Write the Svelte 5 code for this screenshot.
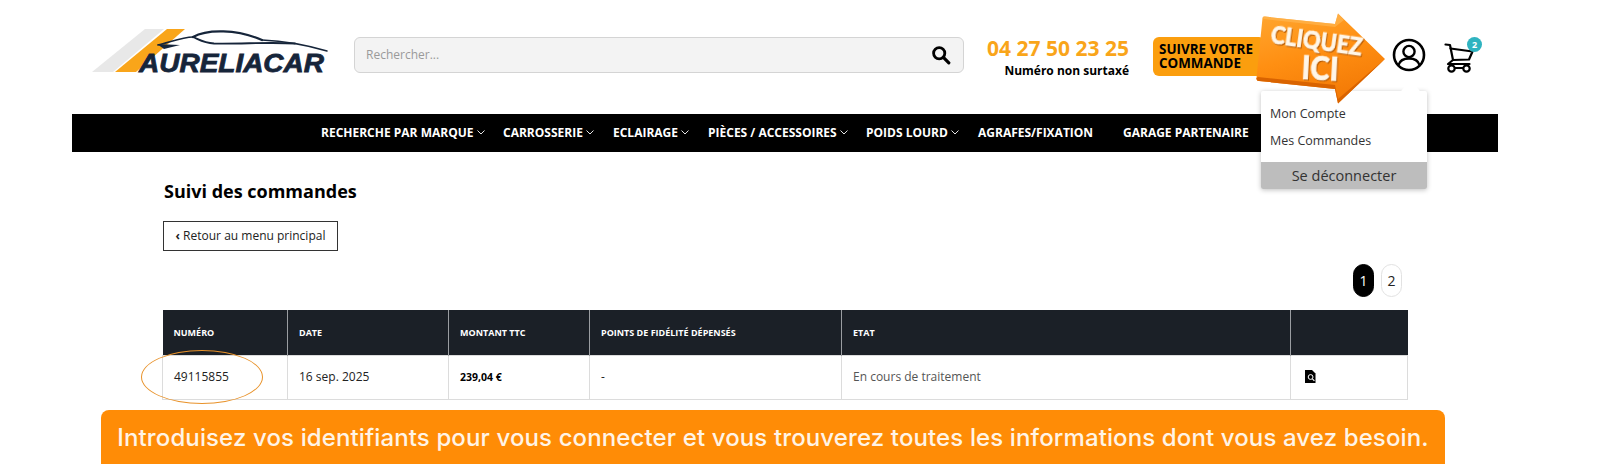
<script>
  const navItems = [
    { label: 'RECHERCHE PAR MARQUE', w: 182, chevron: true },
    { label: 'CARROSSERIE', w: 110, chevron: true },
    { label: 'ECLAIRAGE', w: 95, chevron: true },
    { label: 'PIÈCES / ACCESSOIRES', w: 158, chevron: true },
    { label: 'POIDS LOURD', w: 112, chevron: true },
    { label: 'AGRAFES/FIXATION', w: 145, chevron: false },
    { label: 'GARAGE PARTENAIRE', w: 130, chevron: false }
  ];
  const heads = ['Numéro', 'Date', 'Montant TTC', 'Points de fidélité dépensés', 'Etat', ''];
  const widths = [125, 161, 141, 252, 449, 117];
</script>

<div class="page">
  <header class="top">
    <div class="logo">
      <svg class="logo-art" width="245" height="50" viewBox="0 0 245 50">
        <polygon points="0,44 53,1 72,1 21,44" fill="#e8e8e8" />
        <polygon points="23,44 75,1 93,1 44,44" fill="#f9a51a" />
        <g fill="none" stroke="#16253a" stroke-linecap="round">
          <path d="M66 17 C 76 15 90 9 101 9" stroke-width="1.6" />
          <path d="M101 9 C 115 1 145 1 170 12" stroke-width="2.2" />
          <path d="M101 9 C 108 12 112 15 122 15.5 C 150 16 178 14 203 15.5" stroke-width="1.8" />
          <path d="M170 12 C 193 13 218 18 235 23" stroke-width="1.4" />
        </g>
        <path d="M65 16 L 88 17 L 72 21 Z" fill="#16253a" />
        <text class="logo-text" x="47" y="44" textLength="185" lengthAdjust="spacingAndGlyphs">AURELIACAR</text>
      </svg>
    </div>

    <div class="search">
      <span class="placeholder">Rechercher...</span>
      <svg width="20" height="20" viewBox="0 0 20 20"><circle cx="8.2" cy="8.2" r="5.6" fill="none" stroke="#000" stroke-width="2.8" /><line x1="12.4" y1="12.4" x2="17.8" y2="17.8" stroke="#000" stroke-width="3.2" stroke-linecap="round" /></svg>
    </div>

    <div class="phone">
      <div class="num">04 27 50 23 25</div>
      <div class="sub">Numéro non surtaxé</div>
    </div>

    <div class="track">SUIVRE VOTRE<br />COMMANDE</div>

    <svg class="user" width="34" height="34" viewBox="0 0 34 34">
      <circle cx="17" cy="17" r="15" fill="none" stroke="#000" stroke-width="2.6" />
      <circle cx="17" cy="13.5" r="5.6" fill="none" stroke="#000" stroke-width="2.4" />
      <path d="M6.5 27 C 8 22 12 20.5 17 20.5 C 22 20.5 26 22 27.5 27" fill="none" stroke="#000" stroke-width="2.4" />
    </svg>

    <div class="cart">
      <svg width="33" height="32" viewBox="0 0 32 32">
        <g fill="none" stroke="#000" stroke-width="2.2" stroke-linejoin="round" stroke-linecap="round">
          <path d="M2 2.5 L6.5 3 L9.5 18 L4.5 22 H26" />
          <path d="M7 6.5 L29 9.5 L25.5 17.5 L9.5 18" />
          <circle cx="8" cy="26.5" r="3.2" />
          <circle cx="23" cy="26.5" r="3.2" />
          <line x1="11.5" y1="26" x2="19.5" y2="26" />
        </g>
      </svg>
      <span class="badge">2</span>
    </div>
  </header>

  <nav class="nav">
    {#each navItems as item}
      <a class="nav-item" style="width:{item.w}px">
        <span>{item.label}</span>
        {#if item.chevron}
          <svg width="8" height="5" viewBox="0 0 8 5"><path d="M0.5 0.5 L4 4 L7.5 0.5" fill="none" stroke="#fff" stroke-width="0.9" /></svg>
        {/if}
      </a>
    {/each}
  </nav>

  <main class="main">
    <h1>Suivi des commandes</h1>
    <a class="back"><span class="lt">‹</span> Retour au menu principal</a>
    <div class="pager">
      <span class="pg active">1</span>
      <span class="pg">2</span>
    </div>
    <table>
      <colgroup>
        {#each widths as w}<col style="width:{w}px" />{/each}
      </colgroup>
      <thead>
        <tr>{#each heads as h}<th>{h}</th>{/each}</tr>
      </thead>
      <tbody>
        <tr>
          <td class="first">49115855<span class="ring"></span></td>
          <td>16 sep. 2025</td>
          <td class="amount">239,04 €</td>
          <td>-</td>
          <td class="state">En cours de traitement</td>
          <td>
            <svg class="doc" width="11" height="13" viewBox="0 0 11 13">
              <path d="M0 0 H7 L10.5 3.5 V13 H0 Z" fill="#000" />
              <circle cx="5.6" cy="7" r="2.4" fill="none" stroke="#fff" stroke-width="1" />
              <line x1="7.4" y1="8.8" x2="9.4" y2="10.8" stroke="#fff" stroke-width="1.1" />
            </svg>
          </td>
        </tr>
      </tbody>
    </table>
  </main>

  <div class="dropdown">
    <span class="notch"></span>
    <a class="dd-link">Mon Compte</a>
    <a class="dd-link">Mes Commandes</a>
    <a class="dd-out">Se déconnecter</a>
  </div>

  <svg class="arrow" width="134" height="94" viewBox="0 0 134 94">
    <defs>
      <linearGradient id="ag" x1="0.1" y1="0" x2="0.5" y2="1">
        <stop offset="0" stop-color="#ffa52e" />
        <stop offset="0.5" stop-color="#ff8f12" />
        <stop offset="1" stop-color="#f37a06" />
      </linearGradient>
    </defs>
    <path d="M6.5 5 Q 7 3.4 9 3.6 L 79 11 L 82 0.5 L 129 46 L 82 90.5 L 79 76 L 3 68 Q 0 68 0.5 65 Z" fill="url(#ag)" />
    <path d="M0.5 65 Q 0 68 3 68 L 79 76 L 82 90.5 L 129 46 L 82 86 L 79 72 L 2 64 Z" fill="#d96300" />
    <path d="M6.5 5 Q 7 3.4 9 3.6 L 79 11 L 82 0.5 L 88 7 L 79 14 L 8 6 Z" fill="#ffb550" opacity="0.7" />
    <g class="arrow-text">
      <text transform="translate(14 30) rotate(8)" font-size="24" textLength="92" lengthAdjust="spacingAndGlyphs">CLIQUEZ</text>
      <text transform="translate(45 66) rotate(3)" font-size="32" textLength="37" lengthAdjust="spacingAndGlyphs">ICI</text>
    </g>
  </svg>

  <div class="banner">Introduisez vos identifiants pour vous connecter et vous trouverez toutes les informations dont vous avez besoin.</div>
</div>

<style>
  :global(body) {
    margin: 0;
    background: #fff;
    font-family: "Open Sans", "Liberation Sans", sans-serif;
    color: #000;
  }
  .page {
    position: relative;
    width: 1600px;
    height: 464px;
    overflow: hidden;
  }
  .top {
    display: flex;
    align-items: flex-start;
    height: 114px;
  }
  .logo {
    margin: 28px 0 0 92px;
    width: 262px;
    height: 50px;
  }
  .logo-art { display: block; }
  .logo-text {
    font-family: "Liberation Sans", sans-serif;
    font-weight: 700;
    font-style: italic;
    font-size: 26px;
    fill: #16253a;
    stroke: #16253a;
    stroke-width: 0.8;
  }
  .search {
    margin-top: 37px;
    width: 610px;
    height: 36px;
    box-sizing: border-box;
    display: flex;
    align-items: center;
    justify-content: space-between;
    padding: 0 12px 0 11px;
    background: #f3f3f3;
    border: 1px solid #d4d4d4;
    border-radius: 6px;
  }
  .placeholder { font-size: 12px; color: #9a9a9a; margin-bottom: 2px; }
  .phone {
    margin: 34px 0 0 22px;
    width: 143px;
    text-align: right;
  }
  .num {
    font-size: 21px;
    line-height: 28px;
    font-weight: 700;
    color: #f9a51a;
    white-space: nowrap;
  }
  .sub {
    font-size: 12px;
    line-height: 16px;
    margin-top: 1px;
    font-weight: 700;
    white-space: nowrap;
  }
  .track {
    margin: 37px 0 0 24px;
    width: 112px;
    height: 39px;
    box-sizing: border-box;
    padding: 5px 0 0 6px;
    background: #fb9e0e;
    border-radius: 6px;
    font-size: 13.4px;
    line-height: 14px;
    font-weight: 700;
    white-space: nowrap;
  }
  .user {
    margin: 38px 0 0 127px;
  }
  .cart {
    position: relative;
    margin: 42px 0 0 17px;
    width: 33px;
    height: 32px;
  }
  .badge {
    position: absolute;
    top: -5px;
    left: 24px;
    width: 15px;
    height: 15px;
    border-radius: 50%;
    background: #2fb3c0;
    color: #fff;
    font-size: 9px;
    line-height: 15px;
    font-weight: 700;
    text-align: center;
  }
  .nav {
    display: flex;
    align-items: center;
    box-sizing: border-box;
    height: 38px;
    margin: 0 102px 0 72px;
    padding: 0 0 2px 249px;
    background: #000;
  }
  .nav-item {
    display: flex;
    align-items: center;
    gap: 3px;
    color: #fff;
    font-size: 12px;
    font-weight: 700;
    white-space: nowrap;
    flex: none;
  }
  .main {
    padding: 27px 0 0 163px;
  }
  h1 {
    margin: 0 0 0 1px;
    font-size: 18px;
    line-height: 24px;
    font-weight: 700;
  }
  .back {
    display: block;
    width: 175px;
    height: 30px;
    box-sizing: border-box;
    margin-top: 18px;
    border: 1px solid #333;
    font-size: 12px;
    line-height: 28px;
    text-align: center;
    color: #222;
  }
  .lt { font-weight: 700; }
  .pager {
    display: flex;
    justify-content: flex-end;
    gap: 7px;
    width: 1239px;
    margin-top: 13px;
  }
  .pg {
    width: 21px;
    height: 33px;
    box-sizing: border-box;
    border: 1px solid #e2e2e2;
    border-radius: 11px;
    font-size: 14px;
    line-height: 31px;
    text-align: center;
    color: #222;
  }
  .pg.active {
    background: #000;
    border-color: #000;
    color: #fff;
  }
  table {
    margin: 13px 0 0 -1px;
    width: 1245px;
    table-layout: fixed;
    border-collapse: collapse;
  }
  th {
    height: 45px;
    padding: 0 11px;
    background: #1b2027;
    color: #fff;
    font-size: 9px;
    font-weight: 700;
    text-align: left;
    text-transform: uppercase;
    border: 1px solid #9a9da1;
    border-top: 0;
    border-bottom: 0;
    white-space: nowrap;
  }
  th:first-child { border-left: 0; }
  th:last-child { border-right: 0; }
  td {
    height: 44px;
    padding: 0 11px 2px;
    box-sizing: border-box;
    font-size: 12px;
    color: #222;
    border: 1px solid #dcdcdc;
    white-space: nowrap;
  }
  .first { position: relative; }
  .ring {
    position: absolute;
    left: -22px;
    top: -6px;
    width: 120px;
    height: 52px;
    border: 1.4px solid #e8922a;
    border-radius: 50%;
  }
  .amount { font-size: 10.5px; font-weight: 700; color: #000; }
  .state { color: #555; }
  .doc { display: block; margin-left: 3px; }
  .arrow {
    position: absolute;
    left: 1256px;
    top: 13px;
  }
  .arrow-text text {
    font-family: Lato, "Liberation Sans", sans-serif;
    font-weight: 900;
    fill: #fff6e8;
    stroke: #fff6e8;
    stroke-width: 0.7px;
    filter: drop-shadow(1px 1px 0 #b85a00);
  }
  .dropdown {
    position: absolute;
    left: 1261px;
    top: 91px;
    width: 166px;
    height: 98px;
    background: #fff;
    border-radius: 2px;
    box-shadow: 0 1px 5px rgba(0, 0, 0, 0.25);
    display: flex;
    flex-direction: column;
  }
  .notch {
    position: absolute;
    left: 143px;
    top: -7px;
    width: 13px;
    height: 13px;
    background: #fff;
    transform: rotate(45deg);
  }
  .dd-link {
    position: relative;
    font-size: 12.5px;
    line-height: 27px;
    padding-left: 9px;
    color: #333;
  }
  .dd-link:first-of-type { margin-top: 9px; }
  .dd-out {
    margin-top: auto;
    height: 27px;
    background: #bdbdbd;
    font-size: 14.5px;
    line-height: 27px;
    text-align: center;
    color: #333;
    border-radius: 0 0 2px 2px;
  }
  .banner {
    position: absolute;
    left: 101px;
    bottom: 0;
    width: 1344px;
    height: 54px;
    background: #ff8c06;
    border-radius: 8px 8px 0 0;
    color: #fff4e6;
    font-family: Inter, sans-serif;
    font-size: 24px;
    font-weight: 500;
    line-height: 56px;
    text-align: center;
    white-space: nowrap;
    letter-spacing: 0.12px;
  }
</style>
